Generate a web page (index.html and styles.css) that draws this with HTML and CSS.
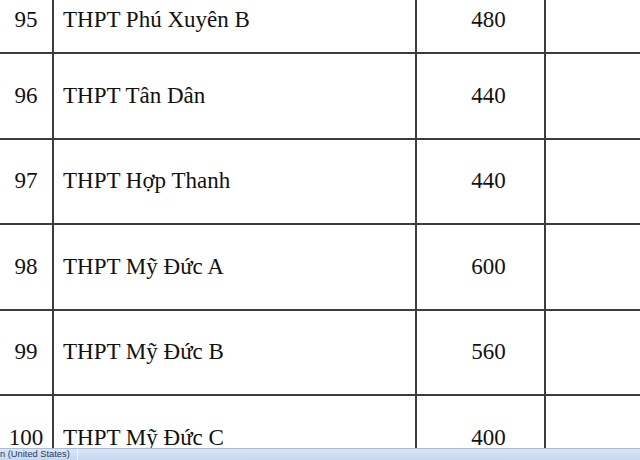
FILE: index.html
```html
<!DOCTYPE html>
<html>
<head>
<meta charset="utf-8">
<link rel="stylesheet" href="styles.css">
</head>
<body>
<div class="window">
  <div class="sheet">
    <div class="row first">
      <div class="cell num">95</div>
      <div class="cell name">THPT Phú Xuyên B</div>
      <div class="cell qty">480</div>
      <div class="cell extra"></div>
    </div>
    <div class="row">
      <div class="cell num">96</div>
      <div class="cell name">THPT Tân Dân</div>
      <div class="cell qty">440</div>
      <div class="cell extra"></div>
    </div>
    <div class="row">
      <div class="cell num">97</div>
      <div class="cell name">THPT Hợp Thanh</div>
      <div class="cell qty">440</div>
      <div class="cell extra"></div>
    </div>
    <div class="row">
      <div class="cell num">98</div>
      <div class="cell name">THPT Mỹ Đức A</div>
      <div class="cell qty">600</div>
      <div class="cell extra"></div>
    </div>
    <div class="row">
      <div class="cell num">99</div>
      <div class="cell name">THPT Mỹ Đức B</div>
      <div class="cell qty">560</div>
      <div class="cell extra"></div>
    </div>
    <div class="row">
      <div class="cell num">100</div>
      <div class="cell name">THPT Mỹ Đức C</div>
      <div class="cell qty">400</div>
      <div class="cell extra"></div>
    </div>
  </div>
  <div class="statusbar">
    <span class="status-lang">n (United States)</span>
  </div>
</div>
</body>
</html>
```

FILE: styles.css
```css
html, body {
  margin: 0;
  padding: 0;
  background: #ffffff;
}

.window {
  width: 640px;
  height: 460px;
  display: flex;
  flex-direction: column;
  overflow: hidden;
}

.sheet {
  flex: 1;
  overflow: hidden;
  font-family: "Liberation Serif", "Times New Roman", serif;
  font-size: 23px;
  color: #111;
}

.row {
  display: grid;
  grid-template-columns: 54px 363px 129px 1fr;
  height: 85.5px;
  box-sizing: border-box;
  border-bottom: 2px solid #3c3c3c;
}

.row.first {
  height: 54px;
}

.cell {
  display: flex;
  align-items: center;
  box-sizing: border-box;
  border-right: 2px solid #3c3c3c;
  white-space: nowrap;
}

.row.first .cell {
  padding-bottom: 12px;
}

.num {
  justify-content: center;
}

.name {
  padding-left: 9px;
}

.qty {
  justify-content: center;
  padding-left: 16px;
}

.extra {
  border-right: none;
}

.statusbar {
  height: 12px;
  flex: none;
  box-sizing: border-box;
  border-top: 1px solid #a9bcd6;
  background: linear-gradient(#d9e6f7, #c6d9f1);
  display: flex;
  align-items: flex-start;
  overflow: hidden;
}

.status-lang {
  font-family: "Liberation Sans", Arial, sans-serif;
  font-size: 9.3px;
  line-height: 11px;
  color: #1e3a5f;
  padding-right: 7px;
  border-right: 1px solid #eef4fc;
  height: 11px;
}
```
